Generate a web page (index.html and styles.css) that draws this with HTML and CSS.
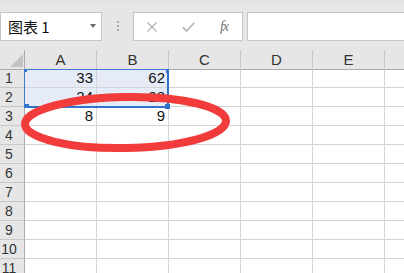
FILE: index.html
```html
<!DOCTYPE html>
<html lang="zh-CN">
<head>
  <meta charset="UTF-8" />
  <title>图表 1</title>
  <link rel="stylesheet" href="styles.css">
</head>
<body>
  <div class="app">
    <!-- Name box + formula bar -->
    <div class="toolbar">
      <div class="namebox">
        <span class="name">图表 1</span>
        <span class="caret"></span>
      </div>
      <div class="grip"><i></i><i></i><i></i></div>
      <div class="fbuttons">
        <span class="slot">
          <svg width="10" height="10" viewBox="0 0 10 10"><path d="M0.5 0.5 L9.5 9.5 M9.5 0.5 L0.5 9.5" stroke="#b4b4b4" stroke-width="1.3" fill="none"/></svg>
        </span>
        <span class="slot">
          <svg width="13" height="10" viewBox="0 0 13 10"><path d="M0.8 5.2 L4.6 9 L12.3 0.8" stroke="#b4b4b4" stroke-width="1.6" fill="none"/></svg>
        </span>
        <span class="slot fx">fx</span>
      </div>
      <div class="finput"></div>
    </div>

    <!-- Sheet -->
    <div class="sheet">
      <div class="grid">
        <div class="corner"><span class="tri"></span></div>
        <div class="colhead">A</div>
        <div class="colhead">B</div>
        <div class="colhead">C</div>
        <div class="colhead">D</div>
        <div class="colhead">E</div>
        <div class="colhead"></div>

        <div class="rowhead">1</div>
        <div class="cell sel">33</div>
        <div class="cell sel">62</div>
        <div class="cell"></div><div class="cell"></div><div class="cell"></div><div class="cell"></div>

        <div class="rowhead">2</div>
        <div class="cell sel">24</div>
        <div class="cell sel">28</div>
        <div class="cell"></div><div class="cell"></div><div class="cell"></div><div class="cell"></div>

        <div class="rowhead">3</div>
        <div class="cell">8</div>
        <div class="cell">9</div>
        <div class="cell"></div><div class="cell"></div><div class="cell"></div><div class="cell"></div>

        <div class="rowhead">4</div>
        <div class="cell"></div><div class="cell"></div><div class="cell"></div><div class="cell"></div><div class="cell"></div><div class="cell"></div>
        <div class="rowhead">5</div>
        <div class="cell"></div><div class="cell"></div><div class="cell"></div><div class="cell"></div><div class="cell"></div><div class="cell"></div>
        <div class="rowhead">6</div>
        <div class="cell"></div><div class="cell"></div><div class="cell"></div><div class="cell"></div><div class="cell"></div><div class="cell"></div>
        <div class="rowhead">7</div>
        <div class="cell"></div><div class="cell"></div><div class="cell"></div><div class="cell"></div><div class="cell"></div><div class="cell"></div>
        <div class="rowhead">8</div>
        <div class="cell"></div><div class="cell"></div><div class="cell"></div><div class="cell"></div><div class="cell"></div><div class="cell"></div>
        <div class="rowhead">9</div>
        <div class="cell"></div><div class="cell"></div><div class="cell"></div><div class="cell"></div><div class="cell"></div><div class="cell"></div>
        <div class="rowhead">10</div>
        <div class="cell"></div><div class="cell"></div><div class="cell"></div><div class="cell"></div><div class="cell"></div><div class="cell"></div>
        <div class="rowhead">11</div>
        <div class="cell"></div><div class="cell"></div><div class="cell"></div><div class="cell"></div><div class="cell"></div><div class="cell"></div>
      </div>

      <!-- chart data range highlight -->
      <div class="range">
        <span class="h h-tl"></span>
        <span class="h h-tr"></span>
        <span class="h h-bl"></span>
        <span class="h h-br"></span>
      </div>

      <!-- red hand-drawn mark -->
      <svg class="mark" width="404" height="223" viewBox="0 0 404 223">
        <ellipse cx="125.5" cy="72.5" rx="100.5" ry="25.5" fill="none" stroke="#f23b3b" stroke-width="8" transform="rotate(-1 125.5 72.5)"/>
      </svg>
    </div>
  </div>
</body>
</html>
```

FILE: styles.css
```css
* {
  margin: 0;
  padding: 0;
  box-sizing: border-box;
}

body {
  width: 404px;
  height: 273px;
  overflow: hidden;
  background: #fff;
  font-family: "Liberation Sans", Arial, "Noto Sans CJK SC", sans-serif;
  color: #222;
}

/* Toolbar: name box and formula bar */
.toolbar {
  height: 50px;
  background: #e6e6e6;
  border-top: 1px solid #e0e0e0;
  display: flex;
  align-items: flex-start;
  padding-top: 11px;
}

.namebox {
  width: 102px;
  height: 29px;
  background: #fff;
  border: 1px solid #c6c6c6;
  display: flex;
  align-items: center;
  padding-left: 7px;
  position: relative;
}

.name {
  font-size: 15px;
  color: #111;
  font-family: "Noto Sans CJK SC", "Liberation Sans", sans-serif;
  line-height: 1;
}

.caret {
  position: absolute;
  left: 89px;
  top: 11px;
  border-left: 3.5px solid transparent;
  border-right: 3.5px solid transparent;
  border-top: 4px solid #6a6a6a;
}

.grip {
  width: 2px;
  margin-left: 15px;
  margin-top: 9px;
  display: flex;
  flex-direction: column;
  gap: 2px;
}

.grip i {
  width: 2px;
  height: 2px;
  background: #a6a6a6;
}

.fbuttons {
  width: 110px;
  height: 29px;
  margin-left: 14px;
  background: #fff;
  border: 1px solid #c6c6c6;
  display: flex;
}

.slot {
  width: 36px;
  display: flex;
  align-items: center;
  justify-content: center;
}

.fx {
  font-family: "Liberation Serif", serif;
  font-style: italic;
  font-size: 14px;
  color: #6e6e6e;
  letter-spacing: -1px;
}

.finput {
  flex: 1;
  height: 29px;
  margin-left: 4px;
  background: #fff;
  border: 1px solid #c6c6c6;
  border-right: none;
}

/* Sheet grid */
.sheet {
  position: relative;
}

.grid {
  display: grid;
  grid-template-columns: 25px repeat(6, 72px);
  grid-auto-rows: 19px;
}

.corner,
.colhead {
  height: 20px;
  background: #e6e6e6;
  border-bottom: 1px solid #ababab;
}

.corner {
  border-right: 1px solid #ababab;
  position: relative;
}

.tri {
  position: absolute;
  left: 10px;
  top: 4px;
  width: 0;
  height: 0;
  border-left: 13px solid transparent;
  border-bottom: 13px solid #c3c3c3;
}

.colhead {
  border-right: 1px solid #c8c8c8;
  text-align: center;
  font-size: 15px;
  line-height: 20px;
  color: #333;
}

.rowhead {
  background: #e6e6e6;
  border-right: 1px solid #ababab;
  border-bottom: 1px solid #c8c8c8;
  font-size: 14px;
  line-height: 19px;
  text-align: center;
  padding-right: 6px;
  color: #333;
}

.cell {
  border-right: 1px solid #d4d4d4;
  border-bottom: 1px solid #d4d4d4;
  font-size: 15px;
  line-height: 18px;
  text-align: right;
  padding-right: 3px;
  color: #111;
}

.cell.sel {
  background: #e5ecf7;
}

/* data range frame */
.range {
  position: absolute;
  left: 24px;
  top: 19px;
  width: 145px;
  height: 39px;
  border-top: 1px solid #3f78d2;
  border-left: 1px solid #3f78d2;
  border-right: 2px solid #3372cc;
  border-bottom: 2px solid #3372cc;
}

.h {
  position: absolute;
  background: #3372cc;
}

.h-tl { left: 0; top: 0; width: 2px; height: 2px; }
.h-tr { right: -2px; top: 0; width: 3px; height: 3px; }
.h-bl { left: 0; bottom: -2px; width: 4px; height: 4px; }
.h-br { right: -3px; bottom: -3px; width: 5px; height: 5px; }

.mark {
  position: absolute;
  left: 0;
  top: 0;
}
```
